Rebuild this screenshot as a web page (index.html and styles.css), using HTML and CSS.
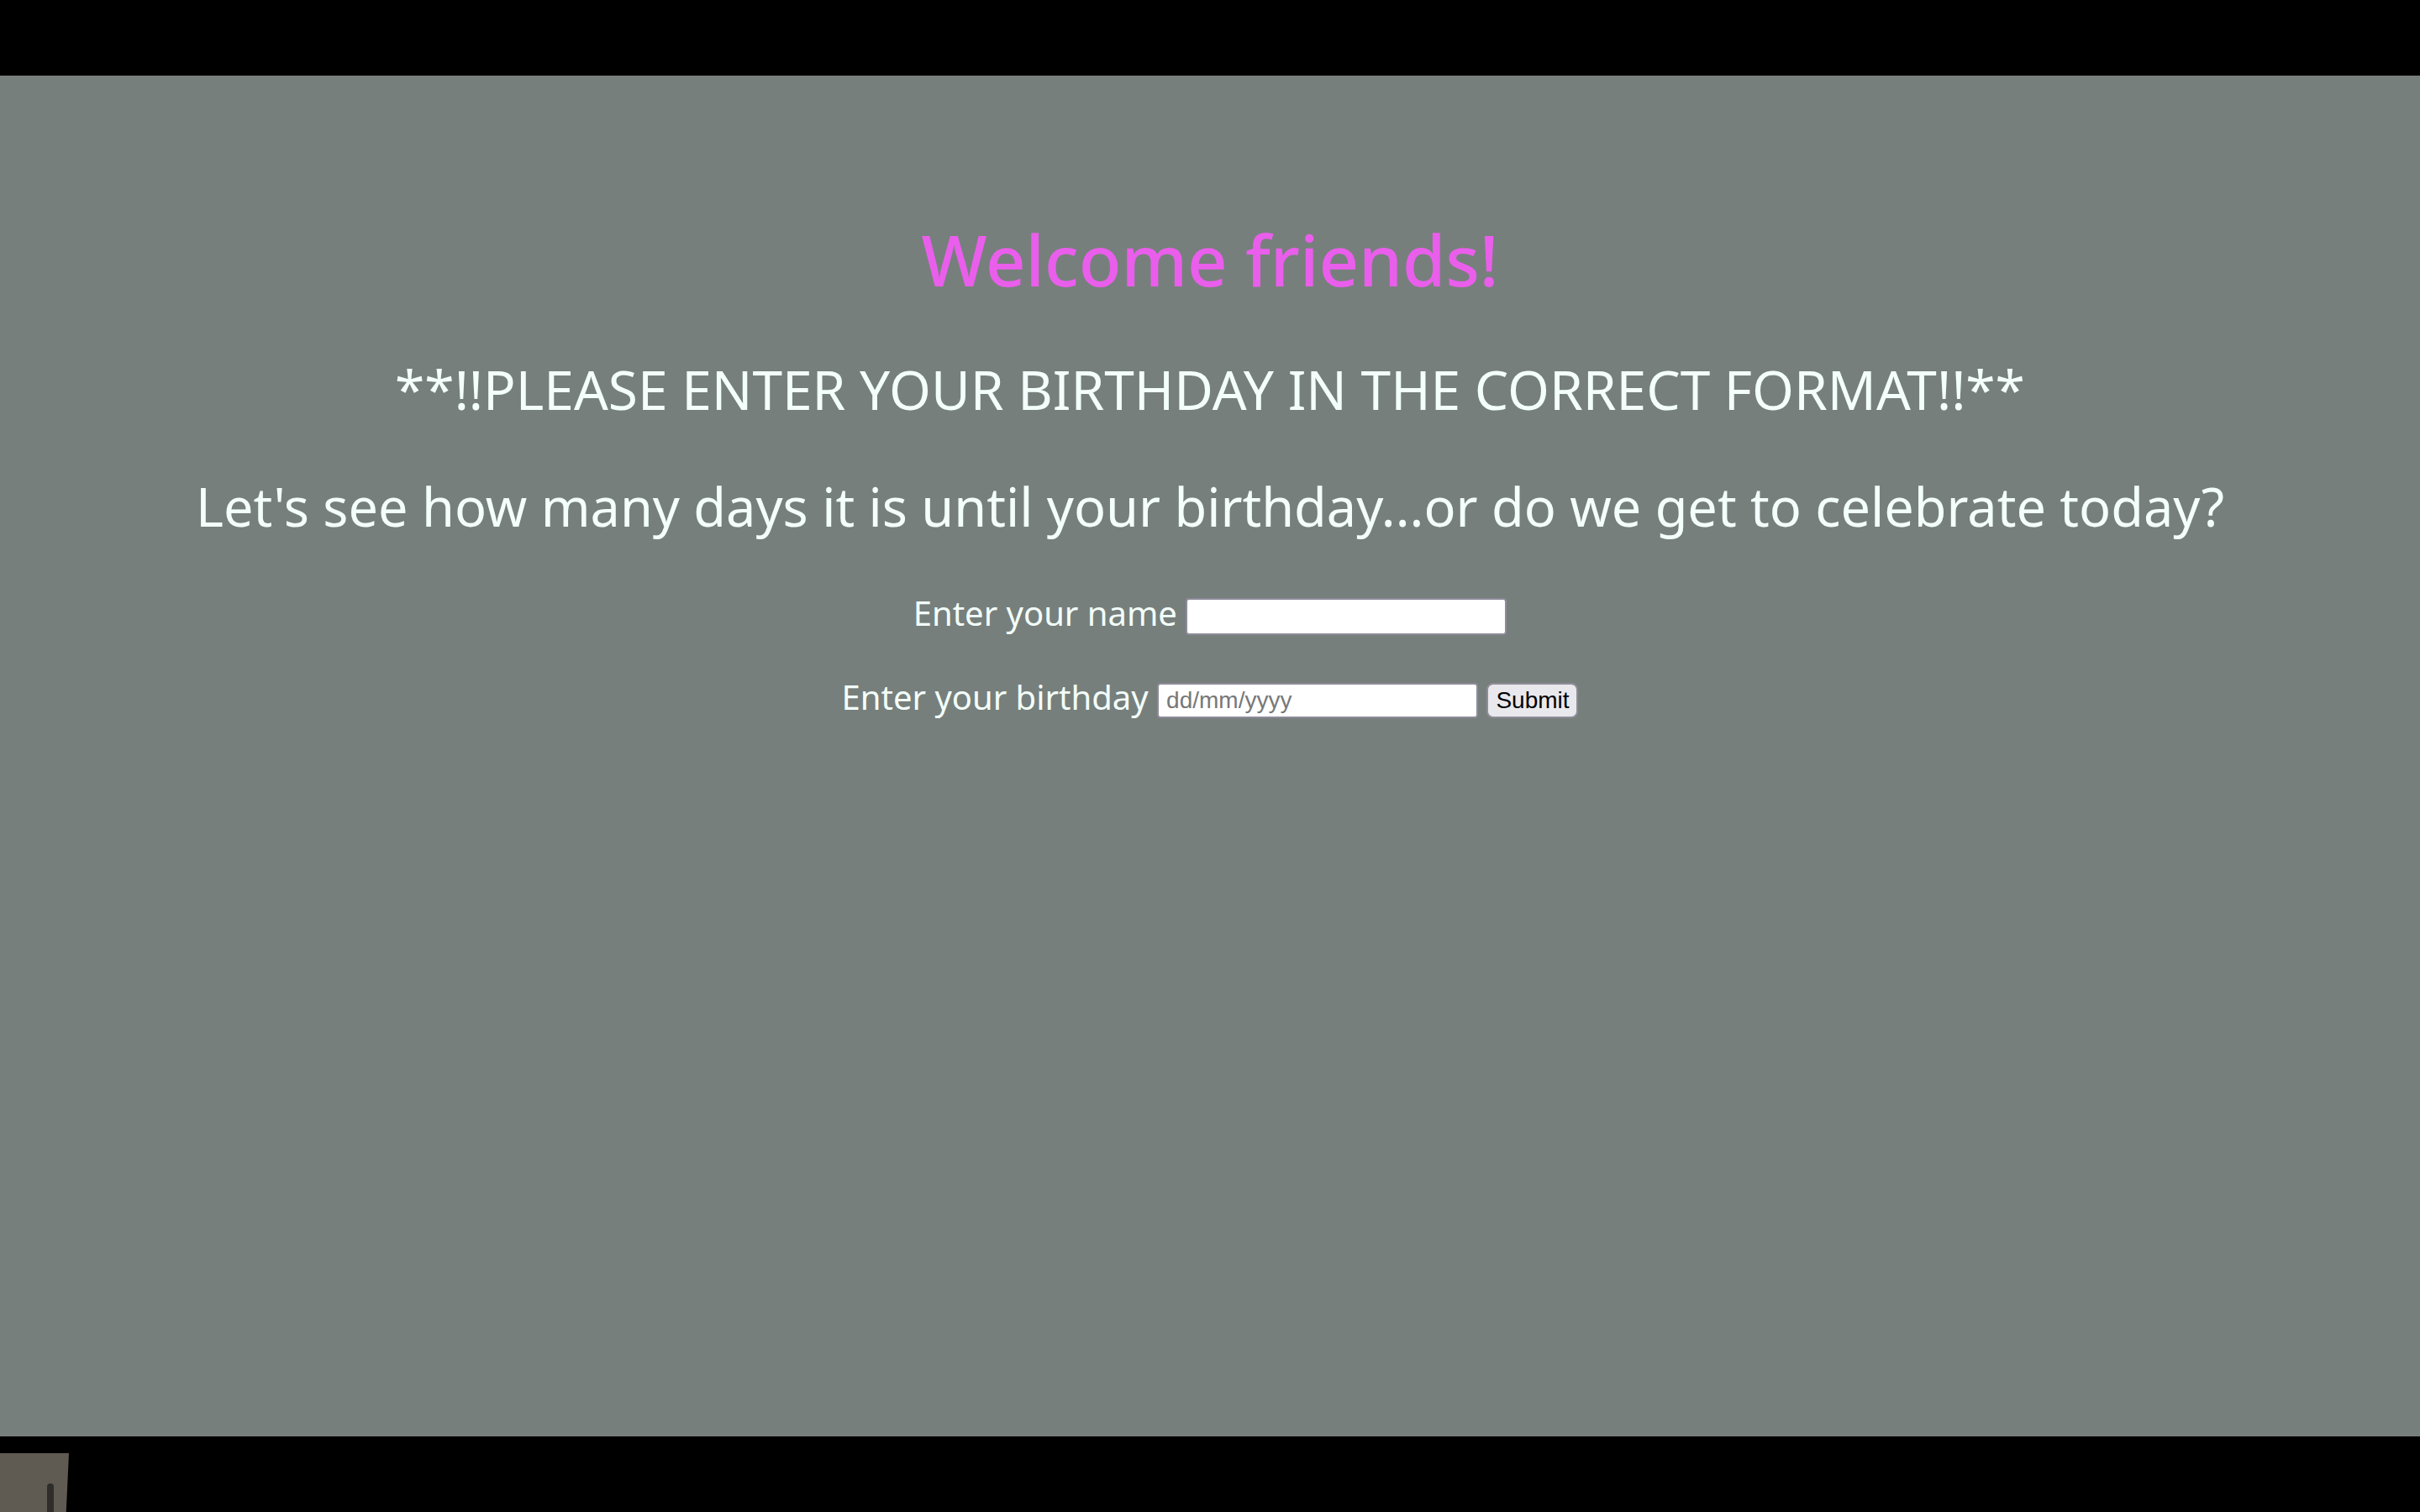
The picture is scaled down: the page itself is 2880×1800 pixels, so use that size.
FILE: index.html
```html
<!DOCTYPE html>
<html lang="en">
<head>
<meta charset="utf-8">
<title>Birthday Countdown</title>
<link rel="stylesheet" href="styles.css">
</head>
<body>
<div class="screen">
  <div class="topbar"></div>
  <main class="page">
    <h1 class="title">Welcome friends!</h1>
    <h2 class="notice">**!!PLEASE ENTER YOUR BIRTHDAY IN THE CORRECT FORMAT!!**</h2>
    <h2 class="intro">Let's see how many days it is until your birthday...or do we get to celebrate today?</h2>
    <form class="form">
      <div class="row row-name">
        <label for="name">Enter your name</label> <input class="field" type="text" id="name">
      </div>
      <div class="row row-date">
        <label for="birthday">Enter your birthday</label> <input class="field" type="text" id="birthday" placeholder="dd/mm/yyyy"> <button class="submit" type="button">Submit</button>
      </div>
    </form>
  </main>
  <div class="bottombar">
    <div class="thumb"><div class="thumb-handle"></div></div>
  </div>
</div>
</body>
</html>
```

FILE: styles.css
```css
* {
  box-sizing: border-box;
}

html,
body {
  margin: 0;
  padding: 0;
  background: #000;
}

.screen {
  width: 2880px;
  height: 1800px;
  display: flex;
  flex-direction: column;
}

.topbar {
  height: 90px;
  background: #000;
  flex: none;
}

.page {
  flex: 1;
  background: #777f7c;
  color: #f3fffa;
  font-family: "Noto Sans", "DejaVu Sans", sans-serif;
  text-align: center;
  padding-top: 177px;
}

.title {
  margin: 0;
  font-size: 83px;
  line-height: 83px;
  font-weight: 500;
  color: #ea5eec;
}

.notice {
  margin: 82px 0 0;
  font-size: 64px;
  line-height: 64px;
  font-weight: 400;
}

.intro {
  margin: 75px 0 0;
  font-size: 63px;
  line-height: 63px;
  font-weight: 400;
}

.form {
  margin: 66px 0 0;
}

.row {
  font-size: 40px;
  line-height: 60px;
}

.row-date {
  margin-top: 40px;
}

.field {
  vertical-align: middle;
  width: 382px;
  height: 44px;
  margin: 0;
  padding: 0 9px;
  background: #fff;
  border: 2px solid #8e8b9b;
  border-radius: 4px;
  font-family: "Liberation Sans", Arial, sans-serif;
  font-size: 28px;
  color: #000;
}

.row-date .field {
  height: 42px;
}

.field::placeholder {
  color: #787878;
}

.submit {
  vertical-align: middle;
  width: 109px;
  height: 42px;
  margin: 0;
  padding: 0;
  background: #e9e8ed;
  border: 2px solid #8f8d9a;
  border-radius: 8px;
  font-family: "Liberation Sans", Arial, sans-serif;
  font-size: 28px;
  color: #000;
}

.bottombar {
  height: 90px;
  flex: none;
  background: #000;
  padding-top: 20px;
  display: flex;
}

.thumb {
  width: 82px;
  height: 70px;
  background: #5f5b52;
  clip-path: polygon(0 0, 100% 0, 96% 100%, 0 100%);
  padding: 36px 0 0 56px;
}

.thumb-handle {
  width: 8px;
  height: 34px;
  background: #2f2d29;
  border-radius: 4px 4px 0 0;
}
```
